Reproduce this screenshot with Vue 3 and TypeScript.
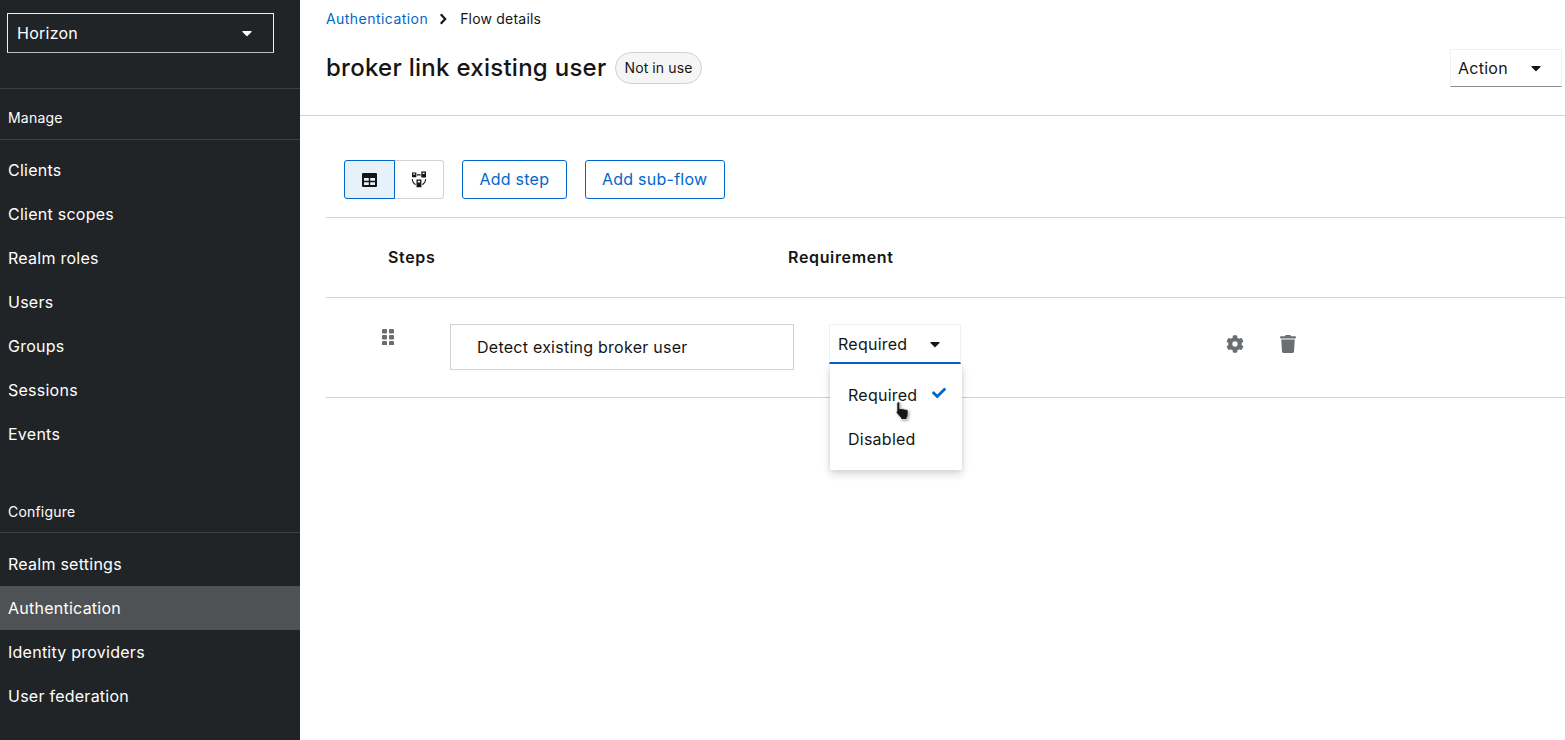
<template>
  <div class="page">
    <aside class="sidebar">
      <div class="realm-select">
        <span>Horizon</span>
        <svg class="caret" viewBox="0 0 320 512" fill="#fff"><path :d="caretPath" /></svg>
      </div>
      <section v-for="group in navGroups" :key="group.title" class="nav-group">
        <h2 class="nav-title">{{ group.title }}</h2>
        <ul class="nav-list">
          <li v-for="item in group.items" :key="item" class="nav-item" :class="{ current: item === 'Authentication' }">{{ item }}</li>
        </ul>
      </section>
    </aside>

    <main class="main">
      <header class="header">
        <nav class="crumbs">
          <a class="crumb-link">Authentication</a>
          <svg class="crumb-sep" viewBox="0 0 8 12"><path d="M1.8 1.2 6.2 6l-4.4 4.8" fill="none" stroke="#151515" stroke-width="2.2" /></svg>
          <span>Flow details</span>
        </nav>
        <div class="title-row">
          <h1 class="title">broker link existing user</h1>
          <span class="pill">Not in use</span>
          <div class="action">
            <span>Action</span>
            <svg class="caret dark" viewBox="0 0 320 512" fill="#151515"><path :d="caretPath" /></svg>
          </div>
        </div>
      </header>

      <div class="content">
        <div class="toolbar">
          <div class="toggle">
            <button class="toggle-btn selected" type="button">
              <svg width="15" height="14" viewBox="0 0 15 14">
                <path fill="#151515" fill-rule="evenodd" d="M1 0h13a1 1 0 0 1 1 1v12a1 1 0 0 1-1 1H1a1 1 0 0 1-1-1V1a1 1 0 0 1 1-1zm1 5v2.800h4.800V5zm6.200 0v2.800H13V5zM2 9.200V12h4.800V9.200zm6.200 0V12H13V9.200z" />
              </svg>
            </button>
            <button class="toggle-btn" type="button">
              <svg width="16" height="17" viewBox="0 0 16 17" fill="#151515">
                <path fill-rule="evenodd" d="M1 1.500h4.400v4.700H1zm1.300 1.100v1.100h1.800V2.600zM10.300.6h4.700v6h-4.700zm1.300 1.200v1.300h2V1.800zM5.500 8.400h4.900v7.800H5.500zm1.300 1.300v1.900h2.300V9.700z" />
                <path d="M6 3.300h3.700v1.100H6zM.8 8h1c.1 2.300 1.100 4 2.800 5v1.200C2.300 13.200.9 11 .8 8zm13.300 0h1c-.1 3-1.500 5.200-3.800 6.200V13c1.700-1 2.700-2.700 2.800-5z" />
              </svg>
            </button>
          </div>
          <button class="outline-btn" type="button">Add step</button>
          <button class="outline-btn" type="button">Add sub-flow</button>
        </div>

        <div class="table-head">
          <span class="col-steps">Steps</span>
          <span>Requirement</span>
        </div>

        <div class="row">
          <svg class="grip" width="12" height="16" viewBox="0 0 12 16" fill="#6a6e73">
            <rect v-for="dot in gripDots" :key="dot.x + '-' + dot.y" :x="dot.x" :y="dot.y" width="5" height="4.500" rx="1" />
          </svg>
          <div class="step-name">Detect existing broker user</div>
          <div class="req">
            <div class="req-toggle">
              <span>Required</span>
              <svg class="caret dark" viewBox="0 0 320 512" fill="#151515"><path :d="caretPath" /></svg>
            </div>
            <ul class="menu">
              <li class="menu-item">
                <span>Required</span>
                <svg class="check" viewBox="0 0 512 512" fill="#06c"><path d="M173.898 439.404l-166.4-166.4c-9.997-9.997-9.997-26.206 0-36.204l36.203-36.204c9.997-9.998 26.207-9.998 36.204 0L192 312.69 432.095 72.596c9.997-9.997 26.207-9.997 36.204 0l36.203 36.204c9.997 9.997 9.997 26.206 0 36.204l-294.4 294.401c-9.998 9.997-26.207 9.997-36.204-.001z" /></svg>
              </li>
              <li class="menu-item">Disabled</li>
            </ul>
            <svg class="hand" width="16" height="20" viewBox="0 0 16 20">
              <path fill="#151515" stroke="#fff" stroke-width=".7" d="M3.300 1c.9 0 1.500.6 1.500 1.500v5.300l1-.3c.6-.1 1.100.1 1.500.4.600-.3 1.300-.2 1.800.3.600-.2 1.300-.1 1.800.4 1-.2 2.200.4 2.200 1.600v3.300c0 1.400-.5 2.500-1.200 3.400V18.500H6v-1.300L2.200 12.800c-.8-.9-1.200-1.700-.9-2.300.4-.6 1-.5.600-.1V2.500C1.900 1.600 2.400 1 3.300 1z" />
            </svg>
          </div>
          <div class="row-actions">
            <svg width="18" height="18" viewBox="0 0 512 512" fill="#6a6e73"><path d="M487.4 315.7l-42.6-24.6c4.300-23.200 4.300-47 0-70.200l42.600-24.600c4.900-2.800 7.100-8.600 5.500-14-11.100-35.600-30-67.800-54.700-94.600-3.800-4.100-10-5.100-14.800-2.300L380.800 110c-17.900-15.400-38.500-27.300-60.800-35.100V25.800c0-5.600-3.900-10.500-9.400-11.700-36.700-8.200-74.300-7.800-109.200 0-5.500 1.200-9.400 6.100-9.400 11.700V75c-22.200 7.900-42.800 19.800-60.800 35.100L88.700 85.500c-4.900-2.800-11-1.900-14.800 2.300-24.700 26.700-43.600 58.900-54.700 94.600-1.700 5.400.6 11.200 5.500 14L67.300 221c-4.300 23.200-4.300 47 0 70.200l-42.600 24.600c-4.900 2.800-7.100 8.600-5.500 14 11.100 35.600 30 67.800 54.700 94.600 3.800 4.100 10 5.100 14.800 2.300l42.600-24.600c17.900 15.400 38.500 27.300 60.800 35.100v49.200c0 5.600 3.900 10.500 9.400 11.700 36.700 8.200 74.300 7.800 109.200 0 5.500-1.200 9.400-6.100 9.400-11.700v-49.200c22.200-7.900 42.800-19.800 60.800-35.100l42.600 24.600c4.900 2.800 11 1.900 14.800-2.300 24.700-26.700 43.600-58.900 54.700-94.600 1.500-5.500-.7-11.300-5.600-14.100zM256 336c-44.100 0-80-35.900-80-80s35.900-80 80-80 80 35.900 80 80-35.900 80-80 80z" /></svg>
            <svg width="16" height="18" viewBox="0 0 448 512" fill="#6a6e73"><path d="M432 32H312l-9.400-18.700A24 24 0 0 0 281.100 0H166.800a23.720 23.720 0 0 0-21.400 13.300L136 32H16A16 16 0 0 0 0 48v32a16 16 0 0 0 16 16h416a16 16 0 0 0 16-16V48a16 16 0 0 0-16-16zM53.200 467a48 48 0 0 0 47.900 45h245.800a48 48 0 0 0 47.900-45L416 128H32z" /></svg>
          </div>
        </div>
      </div>
    </main>
  </div>
</template>

<script setup lang="ts">
const caretPath =
  'M31.3 192h257.3c17.8 0 26.7 21.5 14.1 34.1L174.1 354.8c-7.8 7.8-20.5 7.8-28.3 0L17.2 226.1C4.6 213.5 13.5 192 31.3 192z'

const navGroups = [
  { title: 'Manage', items: ['Clients', 'Client scopes', 'Realm roles', 'Users', 'Groups', 'Sessions', 'Events'] },
  { title: 'Configure', items: ['Realm settings', 'Authentication', 'Identity providers', 'User federation'] }
]

const gripDots = [0, 6, 12].flatMap((y) => [0, 7].map((x) => ({ x, y })))
</script>

<style>
html,
body {
  margin: 0;
  background: #fff;
}
</style>

<style scoped>
.page {
  display: grid;
  grid-template-columns: 300px 1fr;
  height: 740px;
  overflow: hidden;
  font-family: Inter, 'Open Sans', 'Liberation Sans', sans-serif;
  font-size: 16px;
  letter-spacing: 0.25px;
  color: #151515;
}

.sidebar {
  background: #212427;
  color: #fff;
  overflow: hidden;
}

.realm-select {
  display: flex;
  justify-content: space-between;
  align-items: center;
  box-sizing: border-box;
  width: 267px;
  height: 40px;
  margin: 13px 0 35px 7px;
  padding: 0 20px 0 9px;
  border: 1px solid #f0f0f0;
  border-bottom-color: #b8bbbe;
}

.caret {
  width: 12px;
  height: 16px;
}

.nav-group {
  padding-bottom: 34px;
}

.nav-title {
  display: flex;
  align-items: center;
  box-sizing: border-box;
  height: 52px;
  margin: 0;
  padding: 7px 8px 0;
  border-top: 1px solid #3c3f42;
  border-bottom: 1px solid #3c3f42;
  font-size: 14px;
  font-weight: 400;
  letter-spacing: 0.2px;
}

.nav-group + .nav-group .nav-title {
  height: 43px;
  border-top: 0;
  padding-top: 0;
}

.nav-list {
  margin: 0;
  padding: 8px 0 0;
  list-style: none;
}

.nav-group + .nav-group .nav-list {
  padding-top: 9px;
}

.nav-item {
  display: flex;
  align-items: center;
  height: 44px;
  padding: 0 8px;
}

.nav-item.current {
  background: #4f5255;
}

.main {
  min-width: 0;
}

.header {
  height: 115px;
  padding-left: 26px;
  border-bottom: 1px solid #d2d2d2;
}

.crumbs {
  display: flex;
  align-items: center;
  height: 37px;
  font-size: 14px;
  letter-spacing: 0.2px;
}

.crumb-link {
  color: #06c;
  letter-spacing: 0.45px;
}

.crumb-sep {
  width: 8px;
  height: 12px;
  margin: 0 13px 0 11px;
}

.title-row {
  display: flex;
  align-items: center;
  height: 37px;
  margin-top: 12px;
}

.title {
  margin: 0;
  font-size: 24px;
  font-weight: 500;
  letter-spacing: 0.27px;
}

.pill {
  display: flex;
  align-items: center;
  box-sizing: border-box;
  height: 32px;
  margin-left: 8px;
  padding: 0 9px;
  border: 1px solid #d2d2d2;
  border-radius: 16px;
  background: #f5f5f5;
  font-size: 14px;
  letter-spacing: 0.1px;
}

.action {
  display: flex;
  justify-content: space-between;
  align-items: center;
  box-sizing: border-box;
  width: 112px;
  height: 38px;
  margin-left: auto;
  margin-right: 3px;
  padding: 0 19px 0 7px;
  border: 1px solid #f0f0f0;
  border-bottom-color: #8a8d90;
}

.content {
  padding: 44px 0 0 26px;
}

.toolbar {
  display: flex;
  gap: 18px;
  height: 39px;
  padding: 0 0 18px 18px;
  border-bottom: 1px solid #d2d2d2;
}

.toggle {
  display: flex;
}

.toggle-btn {
  display: flex;
  justify-content: center;
  align-items: center;
  width: 49px;
  padding: 0;
  border: 1px solid #d2d2d2;
  border-left: 0;
  border-radius: 0 3px 3px 0;
  background: #fff;
}

.toggle-btn.selected {
  width: 51px;
  border: 1px solid #06c;
  border-radius: 3px 0 0 3px;
  background: #e7f1fa;
}

.outline-btn {
  padding: 0 16.4px 2px;
  border: 1px solid #06c;
  border-radius: 3px;
  background: #fff;
  color: #06c;
  font: inherit;
  letter-spacing: inherit;
}

.table-head {
  display: flex;
  align-items: center;
  box-sizing: border-box;
  height: 80px;
  padding: 0 0 2px 62px;
  border-bottom: 1px solid #d2d2d2;
  font-size: 16px;
  font-weight: 600;
  letter-spacing: 0.65px;
}

.col-steps {
  width: 400px;
}

.row {
  display: flex;
  align-items: flex-start;
  height: 100px;
  padding: 26px 0 0 56px;
  box-sizing: border-box;
  border-bottom: 1px solid #d2d2d2;
}

.grip {
  margin-top: 5px;
}

.step-name {
  display: flex;
  align-items: center;
  box-sizing: border-box;
  width: 344px;
  height: 46px;
  margin-left: 56px;
  padding-left: 26px;
  border: 1px solid #d2d2d2;
}

.req {
  position: relative;
  width: 132px;
  margin-left: 35px;
}

.req-toggle {
  display: flex;
  justify-content: space-between;
  align-items: center;
  box-sizing: border-box;
  height: 40px;
  padding: 0 19px 0 8px;
  border: 1px solid #f0f0f0;
  border-bottom: 2px solid #06c;
}

.menu {
  position: absolute;
  top: 40px;
  left: 1px;
  width: 132px;
  box-sizing: border-box;
  margin: 0;
  padding: 9px 0;
  list-style: none;
  background: #fff;
  box-shadow: 0 4px 8px rgba(3, 3, 3, 0.16), 0 0 4px rgba(3, 3, 3, 0.08);
  z-index: 2;
}

.menu-item {
  display: flex;
  align-items: center;
  height: 44px;
  padding: 0 16px 0 18px;
  color: #151515;
}

.check {
  width: 14px;
  height: 14px;
  margin-left: auto;
  margin-top: -4px;
}

.hand {
  position: absolute;
  top: 77px;
  left: 66px;
  z-index: 3;
  filter: drop-shadow(1px 1px 1px rgba(0, 0, 0, 0.35));
}

.row-actions {
  display: flex;
  align-items: center;
  gap: 36px;
  height: 40px;
  margin-left: 265px;
}
</style>
